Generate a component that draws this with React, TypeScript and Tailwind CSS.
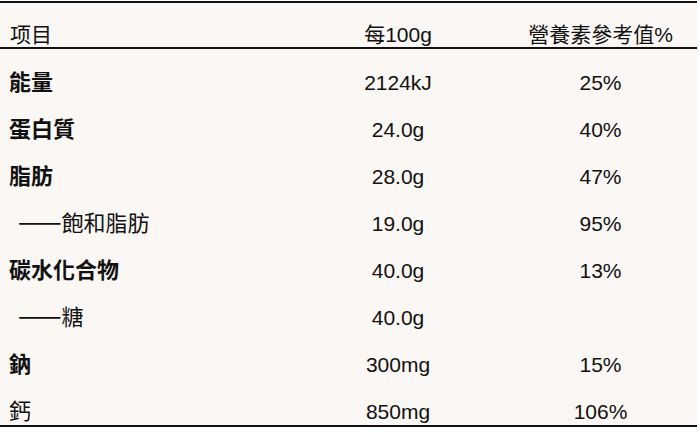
const rows: { name: string; bold?: boolean; sub?: boolean; per: string; nrv: string }[] = [
  { name: "能量", bold: true, per: "2124kJ", nrv: "25%" },
  { name: "蛋白質", bold: true, per: "24.0g", nrv: "40%" },
  { name: "脂肪", bold: true, per: "28.0g", nrv: "47%" },
  { name: "飽和脂肪", sub: true, per: "19.0g", nrv: "95%" },
  { name: "碳水化合物", bold: true, per: "40.0g", nrv: "13%" },
  { name: "糖", sub: true, per: "40.0g", nrv: "" },
  { name: "鈉", bold: true, per: "300mg", nrv: "15%" },
  { name: "鈣", per: "850mg", nrv: "106%" },
];

export default function App() {
  return (
    <div className="min-h-[441px] w-[700px] bg-white pt-px font-['Liberation_Sans','Noto_Sans_CJK_TC','Noto_Sans_CJK_SC',sans-serif] text-[21px] text-[#111]">
      <div className="w-[697px] border-y-2 border-[#111] bg-[#faf7f4]">
        <div className="grid h-[46px] grid-cols-[298px_200px_199px] items-end border-b-2 border-[#111] leading-[24px]">
          <div className="pl-[10px]">项目</div>
          <div className="text-center">每100g</div>
          <div className="pl-[6px] text-center">營養素參考值%</div>
        </div>
        {rows.map((r) => (
          <div key={r.name} className="grid h-[47px] grid-cols-[298px_200px_199px] items-end pb-[1px] leading-[24px]">
            <div className={`${r.sub ? "pl-[18px]" : "pl-[9px]"} ${r.bold ? "font-bold" : ""} text-[22px]`}>
              {r.sub ? <span className="font-['Noto_Sans_CJK_TC',sans-serif] text-[26px] leading-[24px]">——</span> : null}
              {r.name}
            </div>
            <div className="text-center">{r.per}</div>
            <div className="pl-[6px] text-center">{r.nrv}</div>
          </div>
        ))}
      </div>
    </div>
  );
}
